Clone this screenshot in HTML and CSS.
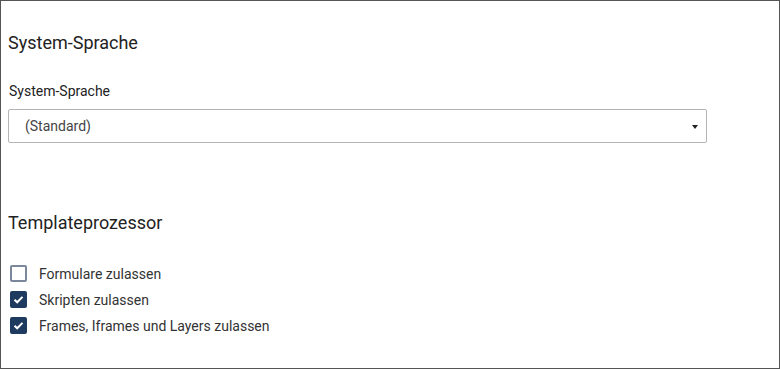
FILE: index.html
```html
<!DOCTYPE html>
<html lang="de">
<head>
<meta charset="utf-8">
<link rel="stylesheet" href="styles.css">
</head>
<body>
<div class="frame">
  <section class="section">
    <h2 class="title">System-Sprache</h2>
    <label class="label">System-Sprache</label>
    <div class="select">
      <span class="select-value">(Standard)</span>
      <span class="caret"></span>
    </div>
  </section>
  <section class="section section-second">
    <h2 class="title">Templateprozessor</h2>
    <ul class="checks">
      <li class="check"><span class="box"></span><span class="check-label">Formulare zulassen</span></li>
      <li class="check"><span class="box on"><svg viewBox="0 0 17 17" width="17" height="17"><path d="M4.5 8.7 L7.2 11.3 L12.5 5.9" fill="none" stroke="#fff" stroke-width="2"/></svg></span><span class="check-label">Skripten zulassen</span></li>
      <li class="check"><span class="box on"><svg viewBox="0 0 17 17" width="17" height="17"><path d="M4.5 8.7 L7.2 11.3 L12.5 5.9" fill="none" stroke="#fff" stroke-width="2"/></svg></span><span class="check-label">Frames, Iframes und Layers zulassen</span></li>
    </ul>
  </section>
</div>
</body>
</html>
```

FILE: styles.css
```css
html, body {
  margin: 0;
  padding: 0;
  background: #fff;
}
body {
  font-family: Roboto, "Liberation Sans", Arial, sans-serif;
  color: #222;
}
.frame {
  box-sizing: border-box;
  width: 780px;
  height: 369px;
  border: 1px solid #555;
  padding: 0 7px;
  overflow: hidden;
}
.section {
  display: flex;
  flex-direction: column;
  align-items: flex-start;
}
.title {
  margin: 31px 0 0 0;
  font-size: 18px;
  font-weight: 400;
  line-height: 22px;
  color: #222;
}
.label {
  margin-top: 28px;
  margin-left: 1px;
  font-size: 14px;
  line-height: 18px;
  color: #222;
}
.select {
  box-sizing: border-box;
  margin-top: 9px;
  width: 699px;
  height: 34px;
  border: 1px solid #b4b4b4;
  border-radius: 2px;
  display: flex;
  align-items: center;
  justify-content: space-between;
  padding: 0 8px 0 16px;
}
.select-value {
  font-size: 14px;
  color: #444;
}
.caret {
  width: 0;
  height: 0;
  border-left: 3px solid transparent;
  border-right: 3px solid transparent;
  border-top: 4px solid #222;
  margin-top: 1px;
}
.section-second .title {
  margin-top: 69px;
}
.checks {
  list-style: none;
  margin: 31px 0 0 2px;
  padding: 0;
  display: flex;
  flex-direction: column;
  gap: 9px;
}
.check {
  display: flex;
  align-items: center;
  height: 17px;
}
.box {
  box-sizing: border-box;
  width: 17px;
  height: 17px;
  border: 2px solid #7b879a;
  border-radius: 2px;
  display: flex;
  align-items: center;
  justify-content: center;
  overflow: hidden;
}
.box.on {
  background: #1f3a5f;
  border-color: #1f3a5f;
}
.box svg {
  display: block;
  flex: none;
}
.check-label {
  margin-left: 12px;
  font-size: 14px;
  color: #333;
}
```
